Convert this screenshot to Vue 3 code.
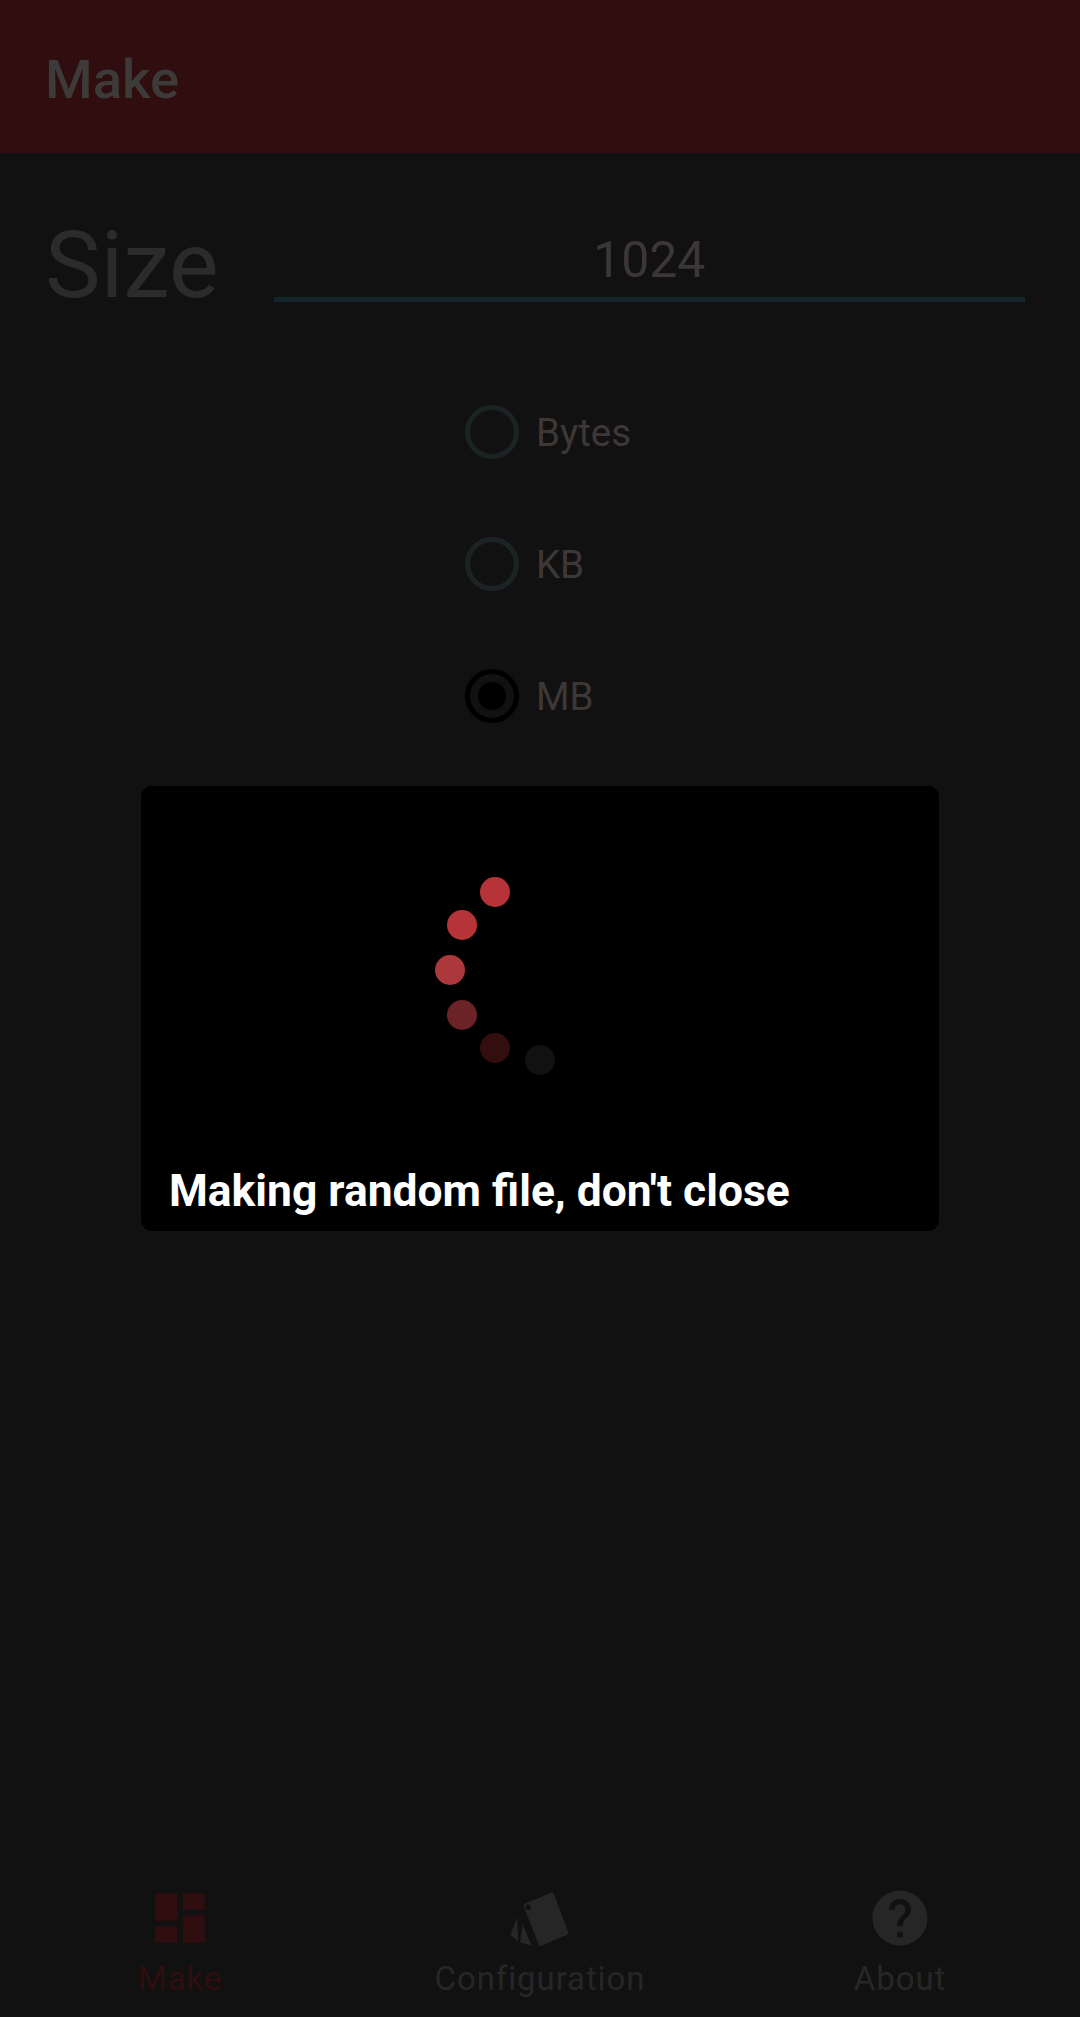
<template>
  <div class="page">
    <header class="app-bar">
      <span class="app-title">Make</span>
    </header>

    <main class="content">
      <div class="size-row">
        <span class="size-label">Size</span>
        <div class="size-input">1024</div>
      </div>

      <div class="unit-list">
        <div v-for="unit in units" :key="unit" class="unit">
          <span class="radio" :class="{ checked: unit === selected }"></span>
          <span class="unit-label">{{ unit }}</span>
        </div>
      </div>
    </main>

    <nav class="tabs">
      <div class="tab active">
        <svg class="tab-icon" viewBox="0 0 24 24">
          <path d="M3.4 3h7.2c.2 0 .4.2.4.4v9.2c0 .2-.2.4-.4.4H3.4c-.2 0-.4-.2-.4-.4V3.400c0-.2.2-.4.4-.4zM13.400 3h7.200c.2 0 .4.2.4.4v5.200c0 .2-.2.4-.4.4h-7.200c-.2 0-.4-.2-.4-.4V3.400c0-.2.2-.4.4-.4zM3.400 15h7.200c.2 0 .4.2.4.4v5.200c0 .2-.2.4-.4.4H3.400c-.2 0-.4-.2-.4-.4v-5.200c0-.2.2-.4.4-.4zM13.400 11h7.200c.2 0 .4.2.4.4v9.200c0 .2-.2.4-.4.4h-7.200c-.2 0-.4-.2-.4-.4v-9.200c0-.2.2-.4.4-.4z" />
        </svg>
        <span class="tab-label">Make</span>
      </div>
      <div class="tab">
        <svg class="tab-icon" viewBox="0 0 66 66">
          <path class="card" d="M18.500 20.500 45 9.500 59.500 48 33.500 59z" />
          <circle class="card-hole" cx="21.300" cy="22.300" r="2.700" />
          <path d="M10.300 32.300 3.800 48.500c-.3 1 0 1.500.7 2L11.300 56.700z" />
          <path d="M15.700 39.300 13 57.300 24.700 61z" />
        </svg>
        <span class="tab-label">Configuration</span>
      </div>
      <div class="tab">
        <svg class="tab-icon" viewBox="0 0 24 24">
          <path d="M12 2C6.480 2 2 6.480 2 12s4.480 10 10 10 10-4.480 10-10S17.520 2 12 2zm1 17h-2v-2h2v2zm2.070-7.750l-.9.920C13.450 12.900 13 13.500 13 15h-2v-.5c0-1.100.45-2.100 1.170-2.830l1.240-1.260c.37-.36.59-.86.59-1.410 0-1.100-.9-2-2-2s-2 .9-2 2H8c0-2.210 1.790-4 4-4s4 1.790 4 4c0 .88-.36 1.680-.93 2.250z" />
        </svg>
        <span class="tab-label">About</span>
      </div>
    </nav>

    <div class="overlay">
      <div class="dialog">
        <div class="spinner">
          <span
            v-for="dot in dots"
            :key="dot.angle"
            class="dot"
            :style="{ left: dot.x + 'px', top: dot.y + 'px', background: dot.color }"
          ></span>
        </div>
        <p class="dialog-text">Making random file, don't close</p>
      </div>
    </div>
  </div>
</template>

<script setup>
const units = ['Bytes', 'KB', 'MB']
const selected = 'MB'

// six dots of the spinner, fading along the left half of a circle
const colors = ['#b63337', '#b63337', '#ad383b', '#6b2327', '#320e0f', '#111111']
const dots = colors.map((color, i) => {
  const angle = (240 - i * 30) * Math.PI / 180
  return {
    angle: i,
    color,
    x: 90 + 90 * Math.cos(angle),
    y: 90 + 90 * Math.sin(angle)
  }
})
</script>

<style scoped>
.page {
  position: relative;
  display: flex;
  flex-direction: column;
  height: 2017px;
  background: #111111;
  font-family: Roboto, sans-serif;
  overflow: hidden;
}

.app-bar {
  display: flex;
  align-items: center;
  height: 153px;
  padding: 5px 0 0 45px;
  box-sizing: border-box;
  background: #300d0e;
}

.app-title {
  font-size: 54.500px;
  font-weight: 500;
  color: #3d3a3a;
}

.content {
  flex: 1;
  display: flex;
  flex-direction: column;
  align-items: center;
}

.size-row {
  align-self: stretch;
  display: flex;
  align-items: flex-end;
  gap: 55px;
  margin-top: 58px;
  padding: 0 55px 0 45px;
}

.size-label {
  font-size: 93.500px;
  font-weight: 400;
  line-height: 108px;
  color: #2b2b2b;
}

.size-input {
  flex: 1;
  height: 84px;
  line-height: 85px;
  margin-bottom: 17px;
  border-bottom: 5px solid #14262a;
  box-sizing: border-box;
  text-align: center;
  font-size: 50px;
  color: #3c3736;
}

.unit-list {
  display: flex;
  flex-direction: column;
  gap: 78px;
  margin-top: 86px;
  margin-left: 16px;
}

.unit {
  display: flex;
  align-items: center;
  gap: 17px;
}

.radio {
  display: flex;
  align-items: center;
  justify-content: center;
  width: 54px;
  height: 54px;
  box-sizing: border-box;
  border: 5px solid #1c2324;
  border-radius: 50%;
}

.radio.checked {
  border-color: #000;
}

.radio.checked::after {
  content: "";
  width: 28px;
  height: 28px;
  border-radius: 50%;
  background: #000;
}

.unit-label {
  font-size: 38.500px;
  color: #3d3736;
}

.tabs {
  display: flex;
  height: 132px;
}

.tab {
  flex: 1;
  display: flex;
  flex-direction: column;
  align-items: center;
  color: #262626;
}

.tab.active {
  color: #300d0e;
}

.tab-icon {
  display: block;
  width: 66px;
  height: 66px;
  fill: currentColor;
}

.card {
  stroke: currentColor;
  stroke-width: 4px;
  stroke-linejoin: round;
}

.card-hole {
  fill: #111111;
}

.tab-label {
  margin-top: 7px;
  font-size: 33px;
  letter-spacing: 0.9px;
  line-height: 42px;
}

.overlay {
  position: absolute;
  inset: 0;
  display: flex;
  align-items: center;
  justify-content: center;
}

.dialog {
  display: flex;
  flex-direction: column;
  width: 798px;
  height: 445px;
  border-radius: 11px;
  background: #000;
}

.spinner {
  position: relative;
  width: 180px;
  height: 180px;
  margin: 94px auto 0;
}

.dot {
  position: absolute;
  width: 30px;
  height: 30px;
  margin: -15px 0 0 -15px;
  border-radius: 50%;
}

.dialog-text {
  margin: auto 0 0;
  padding: 0 0 14px 28px;
  font-size: 44.400px;
  font-weight: 700;
  line-height: 52px;
  color: #fff;
}
</style>
<style>
body {
  background: #111111;
}
</style>
